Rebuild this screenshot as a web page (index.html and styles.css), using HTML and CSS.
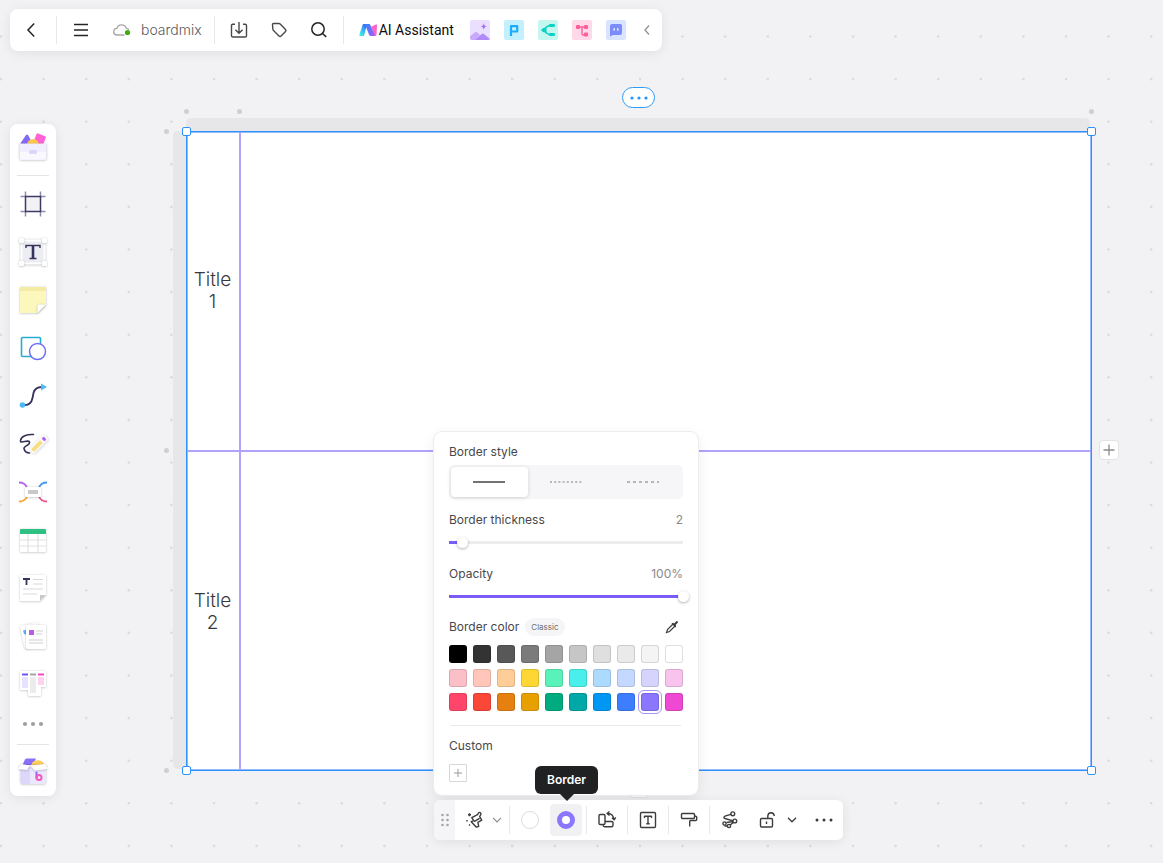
FILE: index.html
```html
<!DOCTYPE html>
<html lang="en">
<head>
<meta charset="utf-8">
<title>boardmix</title>
<link rel="stylesheet" href="styles.css">
</head>
<body>
<main class="canvas">
  <svg class="dots" aria-hidden="true">
    <defs>
      <g id="dot-row"><circle cx="1" cy="1.5" r="1.3"/><circle cx="43.6" cy="1.5" r="1.3"/><circle cx="86.2" cy="1.5" r="1.3"/><circle cx="128.8" cy="1.5" r="1.3"/><circle cx="171.4" cy="1.5" r="1.3"/></g>
      <pattern id="dot-grid" x="0" y="35" width="213" height="213" patternUnits="userSpaceOnUse">
        <g fill="#dbdbdd"><use href="#dot-row"/><use href="#dot-row" y="42.6"/><use href="#dot-row" y="85.2"/><use href="#dot-row" y="127.8"/><use href="#dot-row" y="170.4"/></g>
      </pattern>
    </defs>
    <rect width="100%" height="100%" fill="url(#dot-grid)"/>
  </svg>

  <section class="board" aria-label="Swimlane table">
    <div class="rail rail-top"></div>
    <div class="rail rail-left"></div>
    <table class="lanes">
      <tbody>
        <tr><th scope="row">Title 1</th><td></td></tr>
        <tr><th scope="row">Title 2</th><td></td></tr>
      </tbody>
    </table>
    <span class="mark col-a"></span><span class="mark col-b"></span><span class="mark col-c"></span>
    <span class="mark row-a"></span><span class="mark row-b"></span><span class="mark row-c"></span>
    <span class="handle nw"></span><span class="handle ne"></span><span class="handle sw"></span><span class="handle se"></span>
    <button class="more-pill" aria-label="Table options"><svg width="20" height="4" viewBox="0 0 20 4"><g fill="#2196f9"><circle cx="3" cy="2" r="1.6"/><circle cx="10" cy="2" r="1.6"/><circle cx="17" cy="2" r="1.6"/></g></svg></button>
    <button class="plus plus-right" aria-label="Add column"><svg width="12" height="12" viewBox="0 0 12 12"><path d="M6 .5v11M.5 6h11" stroke="#8c8c8c" stroke-width="1.3"/></svg></button>
    <button class="plus plus-bottom" aria-label="Add row"><svg width="12" height="12" viewBox="0 0 12 12"><path d="M6 .5v11M.5 6h11" stroke="#8c8c8c" stroke-width="1.3"/></svg></button>
  </section>
</main>

<header class="topbar">
  <button class="tb back" aria-label="Back"><svg width="20" height="20" viewBox="0 0 20 20"><path d="M12.2 3.6 6 10l6.200 6.400" class="ink"/></svg></button>
  <i class="sep"></i>
  <button class="tb wide" aria-label="Menu"><svg width="20" height="20" viewBox="0 0 20 20"><path d="M3 4.500h14M3 10h14M3 15.500h14" class="ink"/></svg></button>
  <button class="file"><svg width="18" height="16" viewBox="0 0 18 16"><path d="M11 13H4.200a3.300 3.300 0 0 1-.3-6.600 4.900 4.900 0 0 1 9.400-.2c1 .2 1.800.7 2.300 1.500" fill="none" stroke="#a6a6a8" stroke-width="1.300" stroke-linecap="round"/><circle cx="14.500" cy="10.500" r="2.600" fill="#3fae0c"/></svg><span>boardmix</span></button>
  <i class="sep"></i>
  <button class="tb wide" aria-label="Export"><svg width="20" height="20" viewBox="0 0 20 20"><path d="M6 4.200H3.800a1.300 1.300 0 0 0-1.300 1.300v10.200A1.300 1.300 0 0 0 3.800 17h12.400a1.300 1.300 0 0 0 1.300-1.300V5.500a1.300 1.300 0 0 0-1.300-1.300H14M10 2v11M6.400 9.700 10 13.200l3.600-3.500" class="ink soft"/></svg></button>
  <button class="tb tag" aria-label="Tag"><svg width="20" height="20" viewBox="0 0 20 20"><path d="M3.500 4.500a1 1 0 0 1 1-1h5.300a2 2 0 0 1 1.400.6l5.300 5.400a1.500 1.500 0 0 1 0 2.100l-4.400 4.400a1.500 1.500 0 0 1-2.100 0l-5.500-5.500a2 2 0 0 1-.6-1.300z" class="ink soft"/></svg></button>
  <button class="tb wide" aria-label="Search"><svg width="20" height="20" viewBox="0 0 20 20"><circle cx="9" cy="9" r="6.200" class="ink"/><path d="m13.500 13.500 3.700 3.400" class="ink"/></svg></button>
  <i class="sep"></i>
  <button class="ai"><svg width="18" height="14" viewBox="0 0 18 14"><defs><linearGradient id="ai1" x1="0" y1="1" x2=".7" y2="0"><stop stop-color="#4bf5dc"/><stop offset=".55" stop-color="#35b8f5"/><stop offset="1" stop-color="#3c62f5"/></linearGradient><linearGradient id="ai2" x1="0" y1="0" x2="1" y2="1"><stop stop-color="#2e86f7"/><stop offset="1" stop-color="#a35cff"/></linearGradient></defs><path d="M4.500 1H8L5 13H.8q-.7-.3-.5-1L3.600 1.700Q3.900 1 4.500 1" fill="url(#ai1)"/><path d="M12.500 3.500 17 1.500Q18 1 18 2l-.5 10q0 1-.8 1H15z" fill="#ff62c9"/><path d="M5.500 1H10q1 0 1.400 1l4.300 10q.2 1-.6 1h-3.500q-1 0-1.400-1L7 4z" fill="url(#ai2)"/></svg><span>AI Assistant</span></button>
  <div class="apps">
    <button class="app" aria-label="AI image"><svg width="20" height="20" viewBox="0 0 20 20"><rect width="20" height="20" rx="2" fill="#eadfff"/><path d="M0 16.500 5 12.300q1-.8 2 0l3 2.600-5.500 5.100H2a2 2 0 0 1-2-2z" fill="#c9a9fb"/><path d="m4.500 20 7.300-6q1-.8 2 0l6.200 5a2 2 0 0 1-2 1z" fill="#b08af8"/><path d="M13.700 3q.3 3.200 3.300 3.500-3 .3-3.300 3.500-.3-3.200-3.300-3.500 3-.3 3.300-3.500" fill="#a56bf9"/></svg></button>
    <button class="app" aria-label="AI presentation"><svg width="20" height="20" viewBox="0 0 20 20"><rect width="20" height="20" rx="2" fill="#c4effd"/><path d="M7 16V6.200h6.200v5.300H7" fill="none" stroke="#1bacfb" stroke-width="2.200" stroke-linejoin="round"/></svg></button>
    <button class="app" aria-label="AI mind map"><svg width="20" height="20" viewBox="0 0 20 20"><rect width="20" height="20" rx="2" fill="#c6f6f0"/><path d="M15 5.500h-3Q8 6 6.500 10 8 14 12 14.500h3" fill="none" stroke="#06d3c3" stroke-width="1.300"/><path d="M3 10q2.500-3.500 5.500-2.200V12.200Q5.500 13.500 3 10" fill="#06d3c3"/><rect x="11" y="4" width="6" height="3" rx="1.300" fill="#06d3c3"/><rect x="11" y="13" width="6" height="3" rx="1.300" fill="#06d3c3"/></svg></button>
    <button class="app" aria-label="AI flowchart"><svg width="20" height="20" viewBox="0 0 20 20"><rect width="20" height="20" rx="2" fill="#ffd9e7"/><path d="M6 7h8M10 7v6.500q0 1.500 1.500 1.500H14" fill="none" stroke="#ff5c9b" stroke-width="1.400"/><g fill="#ff5c9b"><rect x="4" y="5" width="4" height="4" rx="1"/><rect x="12" y="5" width="4" height="4" rx="1"/><rect x="12" y="12.500" width="4" height="4" rx="1"/></g></svg></button>
    <button class="app" aria-label="AI chat"><svg width="20" height="20" viewBox="0 0 20 20"><rect width="20" height="20" rx="2" fill="#d9e4ff"/><path d="M6 4h8.500Q16 4 16 5.500v7q0 2.500-2.500 2.500H7l-3 1.500V6q0-2 2-2" fill="#7d8cfb"/><path d="M8.200 8v2.800M11.800 8v2.800" stroke="#e8ecff" stroke-width="1.400"/></svg></button>
  </div>
  <button class="tb collapse" aria-label="Collapse"><svg width="10" height="12" viewBox="0 0 10 12"><path d="M7 1.500 3 6l4 4.500" fill="none" stroke="#929294" stroke-width="1.300"/></svg></button>
</header>

<nav class="sidebar" aria-label="Tools">
  <button aria-label="Templates"><svg width="32" height="32" viewBox="0 0 32 32"><path d="m3 12 6-9q1-1 2 0l5 9z" fill="#856af8"/><rect x="18" y="2.500" width="10" height="10" rx="1.500" transform="rotate(22 23 7)" fill="#ff62d5"/><circle cx="16" cy="13" r="6" fill="#ffc94a"/><path d="M2.500 11.500h27V26q0 2-2 2h-23q-2 0-2-2z" fill="#f0eeff" class="lift"/><path d="M3 20h26v6q0 1.500-1.500 1.500h-23Q3 27.500 3 26z" fill="#f9f8ff"/><rect x="12" y="18" width="8" height="4" rx="1" fill="#dcd7fa"/></svg></button>
  <hr>
  <button aria-label="Frame"><svg width="32" height="32" viewBox="0 0 32 32"><path d="M8.500 3.500V8M23.500 3.500V8M8.500 24v4.500M23.500 24v4.500M3.500 8.500H8M3.500 23.500H8M24 8.500h4.500M24 23.500h4.500" stroke="#8e8db0" stroke-width="1.500"/><rect x="8.500" y="8.500" width="15" height="15" fill="#f2f2f6" stroke="#3d3b62" stroke-width="1.500"/></svg></button>
  <button aria-label="Text"><svg width="32" height="32" viewBox="0 0 32 32"><rect x="4.500" y="4.500" width="23" height="23" fill="#ececf3" stroke="#fff" stroke-width="2" class="lift"/><g fill="#fff" class="lift"><rect x="2" y="2" width="5" height="5" rx="1"/><rect x="25" y="2" width="5" height="5" rx="1"/><rect x="2" y="25" width="5" height="5" rx="1"/><rect x="25" y="25" width="5" height="5" rx="1"/></g><path d="M9 12V9.500h14V12M16 9.500v13M12.500 22.500h7" fill="none" stroke="#35345c" stroke-width="1.400"/><path d="M16 9.500v13" stroke="#35345c" stroke-width="2.600"/></svg></button>
  <button aria-label="Sticky note"><svg width="32" height="32" viewBox="0 0 32 32"><path d="M3 3h26v17.500L20.500 29H3z" fill="#fbf7bd" class="lift"/><path d="M3 3h26v4H3z" fill="#f5eba4"/><path d="M29 20.500h-7q-1.500 0-1.500 1.500v7z" fill="#fff" class="lift"/></svg></button>
  <button aria-label="Shape"><svg width="32" height="32" viewBox="0 0 32 32"><rect x="4.500" y="5.500" width="19" height="19" rx="1" fill="#fff" stroke="#27abd2" stroke-width="1.600"/><circle cx="20.500" cy="19.500" r="8" fill="#fff" stroke="#6e6ff5" stroke-width="1.500"/></svg></button>
  <button aria-label="Connector"><svg width="32" height="32" viewBox="0 0 32 32"><path d="M7 25q7 .5 8.500-7l1-5Q18 7 25 7" fill="none" stroke="#34325a" stroke-width="1.800"/><circle cx="5.500" cy="25" r="2.800" fill="#4db9fa"/><path d="m24 3.500 6 3.500-6 3.500z" fill="#4db9fa"/></svg></button>
  <button aria-label="Pen"><svg width="32" height="32" viewBox="0 0 32 32"><path d="M16.500 6.500C10 6 4 8.500 3.500 12.500s8-1.500 9 1.500-6 4-5.500 6.500 2.500 4.500 5.500 4.500" fill="none" stroke="#34325a" stroke-width="1.600" stroke-linecap="round"/><g transform="rotate(-45 21 17)" class="lift"><rect x="11.500" y="13.500" width="21" height="7" rx="1.500" fill="#fff"/><rect x="13" y="15" width="13" height="4" rx="1" fill="#f5de83"/><rect x="28" y="15" width="3" height="4" rx="1" fill="#b05be8"/></g></svg></button>
  <button aria-label="Mind map"><svg width="32" height="32" viewBox="0 0 32 32"><g fill="none" stroke-width="1.800"><path d="M2 6.500q6 0 8 5" stroke="#b565e8"/><path d="M30 6.500q-6 0-8 5" stroke="#4195f4"/><path d="M2 25.500q6 0 8-5" stroke="#f5a72f"/><path d="M30 25.500q-6 0-8-5" stroke="#ed5389"/></g><rect x="8" y="11" width="16" height="10" rx="1.500" fill="#fff" class="lift"/><rect x="11" y="14" width="10" height="4" fill="#c9c9cb"/></svg></button>
  <button aria-label="Table"><svg width="32" height="32" viewBox="0 0 32 32"><rect x="3" y="5" width="26" height="23" rx="1" fill="#fff" class="lift"/><path d="M3 10V6q0-1 1-1h24q1 0 1 1v4z" fill="#2fc184"/><path d="M11 10v18M21 10v18M3 16h26M3 22h26" stroke="#e2e2e6" stroke-width="1.200"/></svg></button>
  <button aria-label="Document"><svg width="32" height="32" viewBox="0 0 32 32"><path d="M3 3h26v20l-6 6H3z" fill="#fff" class="lift"/><path d="M29 23h-6v6z" fill="#c9c9cb"/><path d="M6 7h7M9.500 7v6" stroke="#35345c" stroke-width="1.800"/><path d="M16 7.500h10M16 12h10M6 17h20M6 22h14" stroke="#d9d9dd" stroke-width="1.200"/></svg></button>
  <button aria-label="Cards"><svg width="32" height="32" viewBox="0 0 32 32"><rect x="5" y="4" width="18" height="23" rx="1.500" transform="rotate(-12 14 15)" fill="#fff" class="lift"/><path d="m6 10.500 3.500-.8v5L7 14z" fill="#58b5f6"/><rect x="9" y="5" width="20" height="24" rx="1.500" fill="#fff" class="lift"/><rect x="12" y="10" width="5" height="5" fill="#ba5be8"/><path d="M19 11h7M19 14h6M12 20h14M12 23h14" stroke="#cfcfd2" stroke-width="1.200"/></svg></button>
  <button aria-label="Kanban"><svg width="32" height="32" viewBox="0 0 32 32"><path d="M4 3h24q1 0 1 1v14q0 1-1 1h-4v8q0 1-1 1H12q-1 0-1-1v-5H4q-1 0-1-1V4q0-1 1-1" fill="#fff" class="lift"/><path d="M5 9h6v11H5z" fill="#e8e2ff"/><path d="M13 9h6v16h-6z" fill="#ececee"/><path d="M21 9h6v8h-6z" fill="#ffd2f1"/><path d="M5 6.500h6" stroke="#7152f5" stroke-width="2"/><path d="M13 6.500h6" stroke="#a5a5a8" stroke-width="2"/><path d="M21 6.500h6" stroke="#f545c4" stroke-width="2"/></svg></button>
  <button class="short" aria-label="More tools"><svg width="22" height="6" viewBox="0 0 22 6"><g fill="#a0a0a2"><circle cx="3" cy="3" r="2.100"/><circle cx="11" cy="3" r="2.100"/><circle cx="19" cy="3" r="2.100"/></g></svg></button>
  <hr>
  <button aria-label="Resources"><svg width="32" height="32" viewBox="0 0 32 32"><path d="M5 10 8 3.500q.5-1 2-1h9L15 11z" fill="#8a6ff8"/><path d="M14 10a7 7 0 0 1 13.500-1L27 12z" fill="#ffcf5e"/><path d="M3.500 9H29v17q0 2-2 2H5.500q-2 0-2-2z" fill="#ebe7fd" class="lift"/><path d="M3.500 10H13v18H5.500q-2 0-2-2z" fill="#ddd7fb"/><path d="M4 8 13 9.500l-3 4.500-9-1z" fill="#fff" class="lift"/><path d="m28 8-15 1.500 5 5L31 13z" fill="#fff" class="lift"/><path d="M19.500 16.500V22" stroke="#8c62f7" stroke-width="2" stroke-linecap="round"/><circle cx="22" cy="21.500" r="2.500" fill="none" stroke="#f05abf" stroke-width="2"/></svg></button>
</nav>

<div class="dock">
  <form class="popover" aria-label="Border settings">
    <h2>Border style</h2>
    <div class="segments">
      <label><input type="radio" name="style" aria-label="Solid" checked><svg width="32" height="2"><path d="M0 1h32" stroke="#757272" stroke-width="2"/></svg></label>
      <label><input type="radio" name="style" aria-label="Dotted"><svg width="32" height="2"><path d="M0 1h32" stroke="#b9b9bb" stroke-width="2" stroke-dasharray="2 2.200"/></svg></label>
      <label><input type="radio" name="style" aria-label="Dashed"><svg width="32" height="2"><path d="M0 1h32" stroke="#b5b5b7" stroke-width="2" stroke-dasharray="3 3"/></svg></label>
    </div>
    <div class="row"><label for="thick">Border thickness</label><output for="thick">2</output></div>
    <input id="thick" class="slider thin" type="range" min="1" max="41" value="2">
    <div class="row"><label for="opacity">Opacity</label><output for="opacity">100%</output></div>
    <input id="opacity" class="slider full" type="range" min="0" max="100" value="100">
    <div class="row color-head"><h2>Border color</h2><button type="button" class="pill">Classic</button><button type="button" class="picker" aria-label="Pick a color"><svg width="14" height="14" viewBox="0 0 14 14"><path d="m8 4-5.500 5.500L1.500 12.500l3-1L10 6" fill="none" stroke="#3c3c3e" stroke-width="1.200"/><path d="M6.500 3.500 8 2.800 9.200 3.500 11 1.500q1-.8 1.700 0 .7.800-.2 1.600L10.600 5l.7 1.200-1 1.300z" fill="#3c3c3e"/></svg></button></div>
    <div class="palette" role="radiogroup" aria-label="Border color">
      <input type="radio" name="c" aria-label="Black" class="k0"><input type="radio" name="c" aria-label="Gray 9" class="k1"><input type="radio" name="c" aria-label="Gray 8" class="k2"><input type="radio" name="c" aria-label="Gray 7" class="k3"><input type="radio" name="c" aria-label="Gray 6" class="k4"><input type="radio" name="c" aria-label="Gray 5" class="k5"><input type="radio" name="c" aria-label="Gray 4" class="k6"><input type="radio" name="c" aria-label="Gray 3" class="k7"><input type="radio" name="c" aria-label="Gray 2" class="k8"><input type="radio" name="c" aria-label="White" class="k9">
      <input type="radio" name="c" aria-label="Light pink" class="l0"><input type="radio" name="c" aria-label="Light red" class="l1"><input type="radio" name="c" aria-label="Light orange" class="l2"><input type="radio" name="c" aria-label="Yellow" class="l3"><input type="radio" name="c" aria-label="Mint" class="l4"><input type="radio" name="c" aria-label="Cyan" class="l5"><input type="radio" name="c" aria-label="Light sky" class="l6"><input type="radio" name="c" aria-label="Light blue" class="l7"><input type="radio" name="c" aria-label="Light purple" class="l8"><input type="radio" name="c" aria-label="Light magenta" class="l9">
      <input type="radio" name="c" aria-label="Pink" class="s0"><input type="radio" name="c" aria-label="Red" class="s1"><input type="radio" name="c" aria-label="Orange" class="s2"><input type="radio" name="c" aria-label="Amber" class="s3"><input type="radio" name="c" aria-label="Green" class="s4"><input type="radio" name="c" aria-label="Teal" class="s5"><input type="radio" name="c" aria-label="Sky" class="s6"><input type="radio" name="c" aria-label="Blue" class="s7"><input type="radio" name="c" aria-label="Purple" class="s8" checked><input type="radio" name="c" aria-label="Magenta" class="s9">
    </div>
    <hr>
    <h2>Custom</h2>
    <button type="button" class="add" aria-label="Add custom color"><svg width="8" height="8" viewBox="0 0 8 8"><path d="M4 0v8M0 4h8" stroke="#9a9a9c"/></svg></button>
  </form>

  <div class="toolbar" role="toolbar" aria-label="Table formatting">
    <div class="grip"><svg width="8" height="14" viewBox="0 0 8 14"><g fill="#a6a6a9"><circle cx="1.500" cy="2" r="1.300"/><circle cx="6.500" cy="2" r="1.300"/><circle cx="1.500" cy="7" r="1.300"/><circle cx="6.500" cy="7" r="1.300"/><circle cx="1.500" cy="12" r="1.300"/><circle cx="6.500" cy="12" r="1.300"/></g></svg></div>
    <div class="pair">
      <button class="tool" aria-label="Style"><svg width="20" height="20" viewBox="0 0 20 20"><path d="m6.800 7.600 5.700-2.900 1.200-1.900q.8-.8 1.800-.1.900.8.200 2l-1 1.900 2 3.500-3.800 2.200.8 4-2.300.9-5.200-5.500 2.500-1z" class="line"/><path d="m9 11.600 5.600-3.200" class="line"/><path d="M4.500 3.300v3M3 4.800h3M2 10v1.600M4 15.500l1-1" class="line"/></svg></button>
      <button class="chev" aria-label="Style options"><svg width="10" height="6" viewBox="0 0 10 6"><path d="m1 .8 4 4 4-4" fill="none" stroke="#8b8b8e" stroke-width="1.200"/></svg></button>
    </div>
    <i class="sep"></i>
    <button class="tool" aria-label="Fill"><span class="fill-ring"></span></button>
    <button class="tool active" aria-label="Border"><span class="border-ring"></span><span class="tooltip" role="tooltip">Border</span></button>
    <i class="sep"></i>
    <button class="tool" aria-label="Swap orientation"><svg width="20" height="20" viewBox="0 0 20 20"><rect x="2" y="4.500" width="6" height="10" rx="1.200" class="line"/><path d="M8 11.500h6.500q1.500 0 1.500 1.200v2.500q0 1.500-1.500 1.500H7.500q-1.200 0-1.500-1.500M10.500 3.500q5.500-.3 6.500 6M12.500 1.500l-2.500 2 2.500 2M15 7.800l2.100 2 1.600-2.500" class="line"/></svg></button>
    <i class="sep"></i>
    <button class="tool" aria-label="Text"><svg width="20" height="20" viewBox="0 0 20 20"><rect x="2.500" y="2.500" width="15" height="15" rx="1.200" class="line"/><path d="M6.500 8V6.300h7V8M10 6.300v7.400M8.300 13.700h3.400" class="line"/></svg></button>
    <i class="sep"></i>
    <button class="tool" aria-label="Format painter"><svg width="20" height="20" viewBox="0 0 20 20"><rect x="2.500" y="3.500" width="13" height="5" rx="1" class="line"/><path d="M15.500 6.200h1.200q1 0 1 1v2.300q0 1-1 1h-5q-1 0-1 1V16.500" class="line"/></svg></button>
    <i class="sep"></i>
    <button class="tool" aria-label="Connections"><svg width="20" height="20" viewBox="0 0 20 20"><path d="M12.300 3.800 5 6.200Q2.800 7.500 5 8.500l9.700 2.800-8.200 1.200M14.700 11.300 9 16H4.500" class="line"/><circle cx="12.800" cy="3.800" r="1.900" class="line knob"/><circle cx="14.800" cy="11" r="1.900" class="line knob"/><circle cx="9" cy="16" r="1.600" class="line knob"/><circle cx="4.500" cy="13.500" r="1.600" class="line knob"/></svg></button>
    <div class="pair lock">
      <button class="tool" aria-label="Lock"><svg width="20" height="20" viewBox="0 0 20 20"><rect x="2.500" y="8.500" width="12" height="8.500" rx="1.200" class="line"/><path d="M9.800 8.500V6q.2-3.300 3.200-3.300T16.300 6M8.500 11.500v2.500" class="line"/></svg></button>
      <button class="chev" aria-label="Lock options"><svg width="10" height="6" viewBox="0 0 10 6"><path d="m1 .8 4 4 4-4" fill="none" stroke="#3c3c3e" stroke-width="1.300"/></svg></button>
    </div>
    <button class="tool last" aria-label="More"><svg width="18" height="4" viewBox="0 0 18 4"><g fill="#3c3c3e"><circle cx="2" cy="2" r="1.500"/><circle cx="9" cy="2" r="1.500"/><circle cx="16" cy="2" r="1.500"/></g></svg></button>
  </div>
</div>
</body>
</html>
```
FILE: styles.css
```css
* { box-sizing: border-box; }
html, body { height: 100%; }
body { margin: 0; overflow: hidden; background: #f2f2f4; color: #48484a; font: 12px/16px Inter, "Liberation Sans", sans-serif; }
button { display: flex; align-items: center; justify-content: center; flex: none; margin: 0; padding: 0; border: 0; background: none; color: inherit; font: inherit; }
svg { display: block; flex: none; overflow: visible; }
h2 { margin: 0; font-size: 12px; font-weight: 400; line-height: 16px; }
.ink { fill: none; stroke: #242426; stroke-width: 1.5; }
.ink.soft { stroke: #48484a; stroke-width: 1.4; }
.line { fill: none; stroke: #3c3c3e; stroke-width: 1.4; stroke-linejoin: round; }
.line.knob { fill: #fff; }
.lift { filter: drop-shadow(0 0 1px #00000024) drop-shadow(0 1px 1px #00000020); }

/* Canvas and the selected table */
.canvas { position: absolute; inset: 0; overflow: hidden; }
.dots { width: 100%; height: 100%; }
.board { position: absolute; left: 186px; top: 131px; width: 906px; height: 640px; }
.lanes { position: relative; width: 100%; height: 100%; table-layout: fixed; border-collapse: collapse; background: #fff; outline: 1px solid #2b93fb; outline-offset: -1px; box-shadow: inset 0 0 0 2px #92baff; }
.lanes tr { height: 50%; }
.lanes th { width: 54px; padding: 0 5px; border-right: 2px solid #b0a2fd; color: #39393b; font-size: 19px; font-weight: 300; line-height: 22px; }
.lanes tr + tr > * { border-top: 2px solid #b0a2fd; }
.rail { position: absolute; background: #e7e7e9; }
.rail-top { left: 0; right: 2px; top: -13px; height: 14px; border-radius: 5px 5px 0 0; }
.rail-left { top: 0; bottom: 2px; left: -13px; width: 14px; border-radius: 5px 0 0 5px; }
.mark { position: absolute; width: 5px; height: 5px; border-radius: 50%; background: #cfcfd1; }
.col-a, .col-b, .col-c { top: -22px; }
.col-a { left: -2px; }
.col-b { left: 51px; }
.col-c { right: -2px; }
.row-a, .row-b, .row-c { left: -22px; }
.row-a { top: -2px; }
.row-b { top: 317px; }
.row-c { bottom: -2px; }
.handle { position: absolute; width: 9px; height: 9px; border: 1px solid #2b93fb; border-radius: 2px; background: #fff; }
.nw { left: -4px; top: -4px; }
.ne { right: -4px; top: -4px; }
.sw { left: -4px; bottom: -4px; }
.se { right: -4px; bottom: -4px; }
.more-pill { position: absolute; left: 50%; top: -44px; width: 33px; height: 21px; margin-left: -17px; border: 1px solid #2b9bf9; border-radius: 11px; background: #fff; }
.plus { position: absolute; width: 20px; height: 20px; border: 1px solid #e3e3e5; border-radius: 4px; background: #fff; }
.plus-right { right: -27px; top: 309px; }
.plus-bottom { left: 443px; bottom: -27px; }

/* Top bar */
.topbar { position: absolute; left: 10px; top: 9px; display: flex; align-items: center; padding: 0 6px 0 0; height: 42px; border-radius: 8px; background: #fff; box-shadow: 0 2px 12px #00000014; }
.sep { flex: none; width: 1px; height: 28px; background: #e8e8ea; }
.tb { height: 40px; }
.back { width: 46px; padding-right: 2px; }
.wide { width: 48px; }
.tag { width: 32px; }
.file { gap: 10px; height: 40px; padding: 0 12px 0 8px; color: #5a5a5c; font: 300 14px/20px Inter, sans-serif; }
.ai { gap: 2px; height: 40px; padding: 0 16px 0 15px; color: #0c0c0e; font: 400 14px/20px Roboto, sans-serif; }
.apps { display: flex; gap: 14px; }
.collapse { width: 30px; padding-left: 12px; }

/* Sidebar */
.sidebar { position: absolute; left: 10px; top: 124px; display: flex; flex-direction: column; align-items: center; padding: 0 7px; border-radius: 8px; background: #fff; box-shadow: 0 2px 12px #00000014; }
.sidebar button { width: 32px; height: 48px; }
.sidebar .short { height: 32px; }
.sidebar hr { align-self: stretch; width: 32px; height: 1px; margin: 3px 0 4px; border: 0; background: #e4e4e6; }
.sidebar .short + hr { margin-bottom: 3px; margin-top: 4px; }

/* Table toolbar with the border popover above it */
.dock { position: absolute; left: 434px; top: 432px; display: flex; flex-direction: column; align-items: flex-start; gap: 5px; }
.popover { display: flex; flex-direction: column; align-items: stretch; width: 264px; padding: 12px 15px 13px; border-radius: 8px; background: #fff; box-shadow: 0 0 0 1px #ececee, 0 4px 14px #00000014; }
.segments { display: grid; grid-template-columns: repeat(3, 1fr); height: 34px; margin: 5px 0 0; padding: 2px; border-radius: 5px; background: #f6f6f9; }
.segments label { display: flex; align-items: center; justify-content: center; border-radius: 4px; }
.segments label:has(:checked) { background: #fff; box-shadow: 0 1px 4px #00000026; }
.segments input { position: absolute; opacity: 0; pointer-events: none; }
.row { display: flex; align-items: center; justify-content: space-between; margin-top: 16px; }
.segments + .row { margin-top: 13px; }
.row output { color: #8a8a8c; }
.slider { appearance: none; width: 240px; height: 16px; margin: 6px -6px 0 0; background: linear-gradient(#ededef, #ededef) 0 50% / 234px 3px no-repeat; }
.slider::-webkit-slider-thumb { appearance: none; width: 11px; height: 11px; border-radius: 50%; background: #fff; box-shadow: 0 1px 3px #00000050; }
.thin { padding-left: 2px; background: linear-gradient(#7a5cf8, #7a5cf8) 0 50% / 9px 3px no-repeat, linear-gradient(#ededef, #ededef) 0 50% / 234px 3px no-repeat; }
.full { background: linear-gradient(#7a5cf8, #7a5cf8) 0 50% / 234px 3px no-repeat; }
.row.color-head { justify-content: flex-start; margin-top: 14px; }
.pill { height: 18px; margin-left: 6px; padding: 0 6px; border-radius: 9px; background: #f5f5f8; color: #6c6c6e; font-size: 8px; }
.picker { width: 18px; height: 18px; margin: 0 2px 0 auto; }
.palette { display: grid; grid-template-columns: repeat(10, 18px); gap: 6px; margin-top: 9px; }
.palette input { appearance: none; width: 18px; height: 18px; margin: 0; border: 1px solid #00000020; border-radius: 3px; background-clip: border-box; }
.palette input:checked { outline: 1px solid #a594fb; outline-offset: 2px; }
.k0 { background: #000; } .k1 { background: #333; } .k2 { background: #585858; } .k3 { background: #7b7b7b; } .k4 { background: #a5a5a5; }
.k5 { background: #c6c6c6; } .k6 { background: #dfdfdf; } .k7 { background: #eaeaea; } .k8 { background: #f4f4f4; } .k9 { background: #fff; }
.l0 { background: #fbbfc8; } .l1 { background: #ffc6b9; } .l2 { background: #ffcd98; } .l3 { background: #ffd735; } .l4 { background: #58f2ba; }
.l5 { background: #4aefeb; } .l6 { background: #addbff; } .l7 { background: #c5d8ff; } .l8 { background: #d6d4fc; } .l9 { background: #f8c3ed; }
.s0 { background: #ff4569; } .s1 { background: #fa4737; } .s2 { background: #e58011; } .s3 { background: #e7a000; } .s4 { background: #00ab7f; }
.s5 { background: #00a8a8; } .s6 { background: #0096f3; } .s7 { background: #3d7eff; } .s8 { background: #8b77fd; } .s9 { background: #ef48d3; }
.popover hr { align-self: stretch; height: 1px; margin: 14px 2px 12px; border: 0; background: #e8e8ea; }
.add { width: 18px; height: 18px; margin-top: 10px; border: 1px solid #d7d7d9; border-radius: 1px; }
.toolbar { display: flex; align-items: center; gap: 4px; height: 40px; padding-right: 3px; border-radius: 6px; background: #fff; box-shadow: 0 2px 12px #00000014; }
.grip { display: flex; align-items: center; justify-content: center; align-self: stretch; width: 21px; border-radius: 6px 0 0 6px; background: #f5f5f8; }
.pair { display: flex; padding-right: 2px; }
.lock { padding-left: 2px; }
.lock .chev { margin-left: 2px; }
.last { margin-left: 4px; }
.chev { width: 12px; height: 32px; }
.tool { position: relative; width: 32px; height: 32px; border-radius: 4px; }
.active { background: #f1f1f3; }
.fill-ring { width: 18px; height: 18px; border: 1px solid #dcdcde; border-radius: 50%; }
.border-ring { width: 18px; height: 18px; border: 5px solid #8b77fd; border-radius: 50%; background: #fff; }
.tooltip { position: absolute; left: -15px; bottom: 42px; padding: 6px 12px; border-radius: 6px; background: #202123; color: #fff; font-size: 12px; font-weight: 600; line-height: 16px; }
.tooltip::after { content: ""; position: absolute; left: 50%; top: 100%; margin-left: -7px; border: 7px solid transparent; border-top-color: #202123; border-bottom: 0; }
```
